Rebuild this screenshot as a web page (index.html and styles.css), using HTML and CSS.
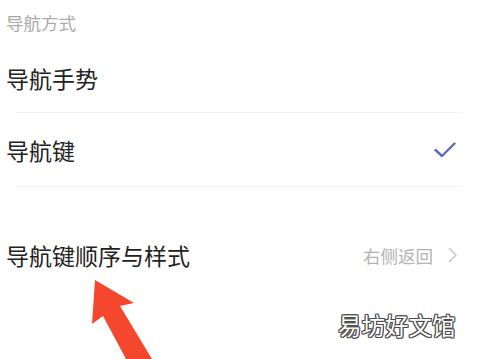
FILE: index.html
```html
<!DOCTYPE html>
<html lang="zh-CN">
<head>
    <meta charset="UTF-8">
    <title>导航方式</title>
    <link rel="stylesheet" href="styles.css">
</head>
<body>
    <div class="page">
        <div class="section-title">导航方式</div>
        <div class="row">
            <span class="label">导航手势</span>
        </div>
        <div class="divider"></div>
        <div class="row tall">
            <span class="label">导航键</span>
            <svg class="check" width="22" height="16" viewBox="0 0 22 16">
                <path d="M1.5 8 L8 14 L20.5 1.5" fill="none" stroke="#5b6cc0" stroke-width="2.4" stroke-linecap="round" stroke-linejoin="round"/>
            </svg>
        </div>
        <div class="divider"></div>
        <div class="group-gap"></div>
        <div class="row">
            <span class="label">导航键顺序与样式</span>
            <span class="value">右侧返回</span>
            <svg class="chevron" width="10" height="16" viewBox="0 0 10 16">
                <path d="M1.5 1.5 L8 8 L1.5 14.5" fill="none" stroke="#c9c9c9" stroke-width="1.6" stroke-linecap="round" stroke-linejoin="round"/>
            </svg>
        </div>
    </div>

    <!-- red pointer arrow drawn over the screenshot -->
    <svg class="arrow" width="484" height="359" viewBox="0 0 484 359">
        <polygon points="95,280 134,303 120,306 152,359 126,359 103,316 92,324" fill="#f4472d"/>
    </svg>

    <div class="watermark">易坊好文馆</div>
</body>
</html>
```

FILE: styles.css
```css
body {
    margin: 0;
    background-color: #ffffff;
    font-family: "Noto Sans CJK SC", "Noto Sans", sans-serif;
    color: #222222;
    width: 484px;
    height: 359px;
    overflow: hidden;
    position: relative;
}

.page {
    display: flex;
    flex-direction: column;
}

.section-title {
    height: 44px;
    display: flex;
    align-items: center;
    padding-left: 6px;
    font-size: 17.5px;
    color: #aaaaaa;
}

.row {
    height: 68px;
    display: flex;
    align-items: center;
    padding: 0 26px 0 6px;
}

.row.tall {
    height: 73px;
}

.divider {
    height: 1px;
    background-color: #f2f2f2;
    margin: 0 22px 0 16px;
}

.label {
    font-size: 23px;
    flex: 1;
}

.check {
    margin-right: 2px;
}

.group-gap {
    height: 34px;
}

.value {
    font-size: 17.5px;
    color: #b3b3b3;
    margin-right: 15px;
}

.arrow {
    position: absolute;
    left: 0;
    top: 0;
}

.watermark {
    position: absolute;
    left: 338px;
    top: 308px;
    font-size: 23.5px;
    color: #ffffff;
    text-shadow:
        1px 0 0 #4a4a4a, -1px 0 0 #4a4a4a, 0 1px 0 #4a4a4a, 0 -1px 0 #4a4a4a,
        1px 1px 0 #4a4a4a, -1px -1px 0 #4a4a4a, 1px -1px 0 #4a4a4a, -1px 1px 0 #4a4a4a;
}
```
